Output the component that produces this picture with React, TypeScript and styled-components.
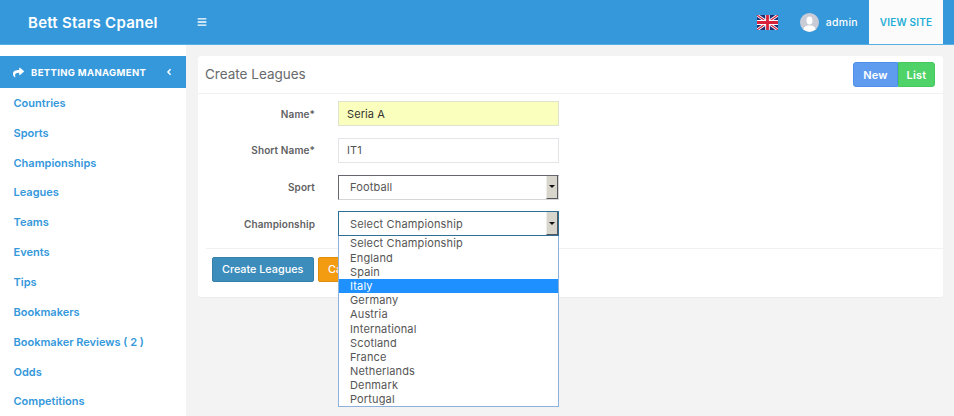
import React from 'react'
import styled, { createGlobalStyle } from 'styled-components'
import { FaBars, FaShare, FaAngleLeft } from 'react-icons/fa'

const GlobalStyle = createGlobalStyle`
  html, body {
    margin: 0;
    padding: 0;
    background: #f3f3f3;
    height: 416px;
    overflow: hidden;
    font-family: Inter, "Open Sans", sans-serif;
  }
  * { box-sizing: border-box; }
`

const Page = styled.div`
  width: 954px;
  height: 416px;
  overflow: hidden;
  display: flex;
  flex-direction: column;
`

const Header = styled.header`
  flex: 0 0 45px;
  display: flex;
  align-items: center;
  background: #3498db;
  border-bottom: 1px solid #5aaee4;
  color: #fff;
  padding-right: 11px;
`

const Brand = styled.div`
  width: 197px;
  padding-left: 28px;
  font-size: 15px;
  font-weight: 600;
  letter-spacing: 0.25px;
`

const MenuToggle = styled.span`
  display: flex;
  font-size: 10px;
`

const HeaderRight = styled.div`
  margin-left: auto;
  display: flex;
  align-items: center;
  height: 100%;
`

const Flag = styled.svg`
  width: 21px;
  height: 15px;
  margin-right: 22px;
`

const Avatar = styled.svg`
  width: 19px;
  height: 19px;
  margin-right: 7px;
`

const UserName = styled.span`
  font-size: 10.5px;
  font-weight: 500;
  letter-spacing: 0.3px;
  margin-right: 11px;
`

const ViewSite = styled.a`
  width: 74px;
  height: 100%;
  background: #fbfbfb;
  color: #1eaed6;
  font-size: 10px;
  font-weight: 600;
  letter-spacing: 0.2px;
  display: flex;
  align-items: center;
  justify-content: center;
`

const Body = styled.div`
  flex: 1;
  display: flex;
  min-height: 0;
`

const Sidebar = styled.aside`
  width: 186px;
  background: #fff;
  padding-top: 11px;
  overflow: hidden;
`

const SideHead = styled.div`
  height: 32px;
  background: #3498db;
  color: #fff;
  display: flex;
  align-items: center;
  padding: 0 12px 0 13px;
  font-size: 9.5px;
  font-weight: 700;
  letter-spacing: 0.35px;

  svg:first-child {
    font-size: 11px;
    margin-right: 7px;
  }
  svg:last-child {
    margin-left: auto;
    font-size: 10px;
  }
`

const SideList = styled.ul`
  list-style: none;
  margin: 0;
  padding: 0;
`

const SideItem = styled.li`
  height: 29.85px;
  display: flex;
  align-items: center;
  padding-left: 13.5px;
  font-size: 11px;
  font-weight: 600;
  letter-spacing: 0;
  color: #3498db;
`

const Main = styled.main`
  flex: 1;
  padding: 11px 11px 0 12px;
`

const Card = styled.section`
  height: 242px;
  background: #fff;
  border-radius: 3px;
  border-bottom: 1px solid #ececec;
`

const CardHead = styled.div`
  height: 38px;
  display: flex;
  align-items: center;
  justify-content: space-between;
  padding: 0 8px 0 7px;
  border-bottom: 1px solid #f1f1f1;
`

const CardTitle = styled.h2`
  margin: 0 0 2px;
  font-size: 13.5px;
  font-weight: 400;
  color: #676a6c;
`

const ButtonGroup = styled.div`
  display: flex;
`

const GroupButton = styled.span<{ $bg: string; $edge: string; $side: 'left' | 'right'; $w: number }>`
  width: ${p => p.$w}px;
  height: 25px;
  display: flex;
  align-items: center;
  justify-content: center;
  background: ${p => p.$bg};
  border: 1px solid ${p => p.$edge};
  border-radius: ${p => (p.$side === 'left' ? '3px 0 0 3px' : '0 3px 3px 0')};
  color: #fff;
  font-size: 11px;
  font-weight: 600;
  letter-spacing: 0.2px;
`

const Form = styled.div`
  padding: 7px 0 0;
  display: flex;
  flex-direction: column;
  gap: 11.8px;
`

const Row = styled.div`
  display: grid;
  grid-template-columns: 117px 221px;
  column-gap: 23px;
  align-items: center;
  height: 25px;
`

const Label = styled.label`
  text-align: right;
  font-size: 10px;
  font-weight: 600;
  color: #5f6163;
  letter-spacing: 0.1px;
`

const TextBox = styled.div<{ $filled?: boolean }>`
  height: 25px;
  display: flex;
  align-items: center;
  padding-left: 8px;
  font-size: 11px;
  border: 1px solid ${p => (p.$filled ? '#dfe2cf' : '#e3e3e8')};
  background: ${p => (p.$filled ? '#fbffbd' : '#fff')};
  color: ${p => (p.$filled ? '#333' : '#555')};
  letter-spacing: 0.1px;
`

const SelectWrap = styled.div`
  position: relative;
`

const SelectBox = styled.div<{ $focus?: boolean }>`
  height: 25px;
  display: flex;
  align-items: center;
  justify-content: space-between;
  padding-left: 11px;
  font-size: 11px;
  color: #555;
  letter-spacing: 0.15px;
  background: #fff;
  border: 1px solid ${p => (p.$focus ? '#2d6f97' : '#d6d6d6')};
  border-top-color: ${p => (p.$focus ? '#2d6f97' : '#66666e')};
  border-left-color: ${p => (p.$focus ? '#2d6f97' : '#66666e')};
`

const ArrowButton = styled.span`
  width: 12px;
  height: 100%;
  background: #d8d5cd;
  border-right: 1px solid #55555c;
  border-bottom: 1px solid #55555c;
  border-left: 1px solid #efeee9;
  display: flex;
  align-items: center;
  justify-content: center;

  &::after {
    content: '';
    border: 3px solid transparent;
    border-top: 3px solid #111;
    border-bottom: 0;
  }
`

const Dropdown = styled.ul`
  position: absolute;
  left: 0;
  right: 0;
  top: 25px;
  margin: 0;
  padding: 0;
  list-style: none;
  z-index: 5;
  height: 171px;
  background: #fff;
  border: 1px solid #8fafdc;
  border-top: 0;
`

const Option = styled.li<{ $active?: boolean }>`
  height: 14.2px;
  line-height: 14.2px;
  padding-left: 11px;
  font-size: 11px;
  letter-spacing: 0.15px;
  color: ${p => (p.$active ? '#fff' : '#555')};
  background: ${p => (p.$active ? '#1e90ff' : 'transparent')};
`

const Footer = styled.div`
  margin: 11.6px 0 0 8px;
  padding: 8px 0 0 6px;
  border-top: 1px solid #f1f1f1;
  display: flex;
  gap: 4px;
`

const ActionButton = styled.span<{ $bg: string; $edge: string; $w: number }>`
  width: ${p => p.$w}px;
  height: 25px;
  padding-left: 9px;
  display: flex;
  align-items: center;
  border-radius: 2px;
  background: ${p => p.$bg};
  border: 1px solid ${p => p.$edge};
  color: #fff;
  font-size: 10.8px;
  font-weight: 500;
  letter-spacing: 0;
`

const sideItems = [
  'Countries', 'Sports', 'Championships', 'Leagues', 'Teams', 'Events', 'Tips',
  'Bookmakers', 'Bookmaker Reviews ( 2 )', 'Odds', 'Competitions',
]

const championships = [
  'Select Championship', 'England', 'Spain', 'Italy', 'Germany', 'Austria',
  'International', 'Scotland', 'France', 'Netherlands', 'Denmark', 'Portugal',
]

function UkFlag() {
  return (
    <Flag viewBox="0 0 60 40" preserveAspectRatio="none">
      <rect width="60" height="40" fill="#1f2f73" />
      <path d="M0 0 L60 40 M60 0 L0 40" stroke="#fff" strokeWidth="8" />
      <path d="M0 0 L60 40 M60 0 L0 40" stroke="#d8203a" strokeWidth="3" />
      <path d="M30 0 V40 M0 20 H60" stroke="#fff" strokeWidth="13" />
      <path d="M30 0 V40 M0 20 H60" stroke="#d8203a" strokeWidth="8" />
    </Flag>
  )
}

function UserIcon() {
  return (
    <Avatar viewBox="0 0 19 19">
      <circle cx="9.5" cy="9.5" r="9.5" fill="#c9ccd6" />
      <ellipse cx="9.5" cy="7.5" rx="3" ry="4" fill="#fff" />
      <path d="M3.5 16.5 C4 13 7 12.6 9.5 12.6 C12 12.6 15 13 15.5 16.5 A9.5 9.5 0 0 1 3.5 16.5 Z" fill="#fff" />
    </Avatar>
  )
}

export default function App() {
  return (
    <Page>
      <GlobalStyle />
      <Header>
        <Brand>Bett Stars Cpanel</Brand>
        <MenuToggle><FaBars /></MenuToggle>
        <HeaderRight>
          <UkFlag />
          <UserIcon />
          <UserName>admin</UserName>
          <ViewSite>VIEW SITE</ViewSite>
        </HeaderRight>
      </Header>
      <Body>
        <Sidebar>
          <SideHead>
            <FaShare />
            BETTING MANAGMENT
            <FaAngleLeft />
          </SideHead>
          <SideList>
            {sideItems.map(item => <SideItem key={item}>{item}</SideItem>)}
          </SideList>
        </Sidebar>
        <Main>
          <Card>
            <CardHead>
              <CardTitle>Create Leagues</CardTitle>
              <ButtonGroup>
                <GroupButton $bg="#5f9cef" $edge="#4d8fea" $side="left" $w={45}>New</GroupButton>
                <GroupButton $bg="#4fd267" $edge="#46c65e" $side="right" $w={37}>List</GroupButton>
              </ButtonGroup>
            </CardHead>
            <Form>
              <Row>
                <Label>Name*</Label>
                <TextBox $filled>Seria A</TextBox>
              </Row>
              <Row>
                <Label>Short Name*</Label>
                <TextBox>IT1</TextBox>
              </Row>
              <Row>
                <Label>Sport</Label>
                <SelectBox>Football<ArrowButton /></SelectBox>
              </Row>
              <Row>
                <Label>Championship</Label>
                <SelectWrap>
                  <SelectBox $focus>Select Championship<ArrowButton /></SelectBox>
                  <Dropdown>
                    {championships.map(c => <Option key={c} $active={c === 'Italy'}>{c}</Option>)}
                  </Dropdown>
                </SelectWrap>
              </Row>
            </Form>
            <Footer>
              <ActionButton $bg="#3c8dbc" $edge="#367fa9" $w={102}>Create Leagues</ActionButton>
              <ActionButton $bg="#f39c12" $edge="#e08e0b" $w={60}>Cancel</ActionButton>
            </Footer>
          </Card>
        </Main>
      </Body>
    </Page>
  )
}
